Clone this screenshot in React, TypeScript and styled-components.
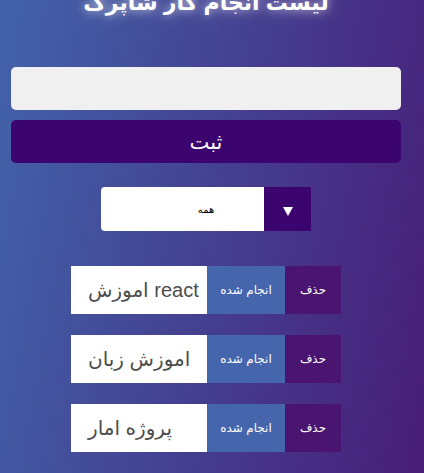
import React from "react";
import styled, { createGlobalStyle } from "styled-components";

const Global = createGlobalStyle`
  html, body { margin: 0; padding: 0; }
  body {
    min-height: 100vh;
    overflow: hidden;
    background: linear-gradient(100deg, #4263aa 0%, #471d77 100%);
    font-family: "Liberation Sans", "DejaVu Sans", sans-serif;
  }
`;

const Page = styled.div`
  width: 412px;
  display: flex;
  flex-direction: column;
  align-items: center;
`;

const Title = styled.h1`
  margin: -10px 0 0;
  font-size: 22px;
  font-weight: bold;
  line-height: 26px;
  color: #fff;
  text-shadow: 0 0 10px rgba(255, 255, 255, 0.6), 0 0 18px rgba(255, 255, 255, 0.35);
`;

const Form = styled.form`
  margin-top: 51px;
  display: flex;
  flex-direction: column;
  align-items: center;
  gap: 10px;
`;

const Input = styled.input`
  box-sizing: border-box;
  width: 390px;
  height: 43px;
  border: none;
  border-radius: 5px;
  background: #f0f0f0;
  outline: none;
`;

const Submit = styled.button`
  width: 390px;
  height: 43px;
  border: none;
  border-radius: 5px;
  background: #3c046e;
  color: #fff;
  font-family: "Liberation Sans", "DejaVu Sans", sans-serif;
  font-size: 21px;
  padding: 0;
`;

const Select = styled.div`
  margin-top: 24px;
  width: 210px;
  height: 44px;
  display: flex;
`;

const SelectValue = styled.div`
  flex: 1;
  background: #fff;
  border-radius: 4px 0 0 4px;
  padding-left: 47px;
  display: flex;
  align-items: center;
  justify-content: center;
  font-size: 10px;
  color: #000;
`;

const Arrow = styled.div`
  width: 47px;
  background: #3c046e;
  display: flex;
  align-items: center;
  justify-content: center;
  padding-top: 5px;
  box-sizing: border-box;
  &::after {
    content: "";
    border-left: 5px solid transparent;
    border-right: 5px solid transparent;
    border-top: 9px solid #fff;
  }
`;

const List = styled.ul`
  list-style: none;
  margin: 35px 0 0;
  padding: 0;
  display: flex;
  flex-direction: column;
  gap: 21px;
`;

const Row = styled.li`
  display: flex;
  width: 270px;
  height: 48px;
`;

const Item = styled.span`
  flex: 1;
  background: #fff;
  display: flex;
  align-items: center;
  padding-left: 17px;
  font-size: 20px;
  color: #4d4d4d;
`;

const ActionButton = styled.button<{ $w: number; $bg: string }>`
  width: ${(p) => p.$w}px;
  border: none;
  padding: 0;
  background: ${(p) => p.$bg};
  color: #fff;
  font-family: "Liberation Sans", "DejaVu Sans", sans-serif;
  font-size: 12px;
`;

const todos = ["اموزش react", "اموزش زبان", "پروژه امار"];

export default function App() {
  return (
    <>
      <Global />
      <Page>
        <Title>لیست انجام کار شاپرک</Title>
        <Form onSubmit={(e) => e.preventDefault()}>
          <Input type="text" />
          <Submit type="submit">ثبت</Submit>
        </Form>
        <Select>
          <SelectValue>همه</SelectValue>
          <Arrow />
        </Select>
        <List>
          {todos.map((t) => (
            <Row key={t}>
              <Item>{t}</Item>
              <ActionButton $w={78} $bg="#4565ad">انجام شده</ActionButton>
              <ActionButton $w={56} $bg="#4a1570">حذف</ActionButton>
            </Row>
          ))}
        </List>
      </Page>
    </>
  );
}
